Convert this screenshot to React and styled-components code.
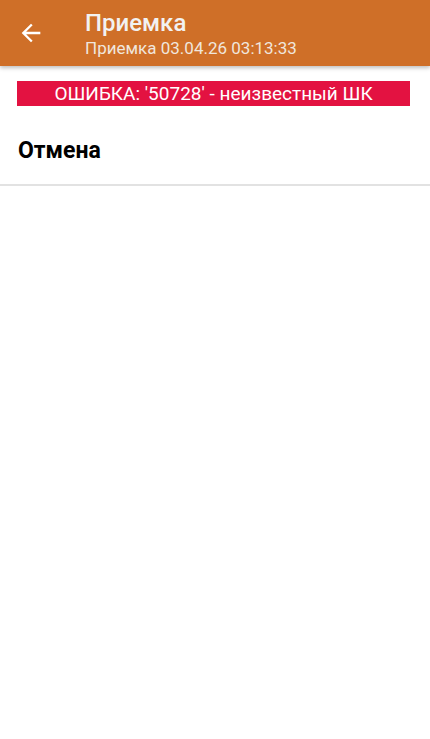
import React from 'react';
import styled, { createGlobalStyle } from 'styled-components';

const Global = createGlobalStyle`
  html, body {
    margin: 0;
    padding: 0;
    background: #ffffff;
    font-family: Roboto, 'Noto Sans', sans-serif;
  }
`;

const Page = styled.div`
  width: 430px;
  height: 739px;
  background: #ffffff;
  display: flex;
  flex-direction: column;
`;

const Toolbar = styled.div`
  height: 66px;
  flex-shrink: 0;
  background: #cf6f28;
  display: flex;
  align-items: center;
  box-shadow: 0 2px 4px rgba(0, 0, 0, 0.25);
  position: relative;
  z-index: 1;
`;

const BackButton = styled.div`
  width: 85px;
  height: 66px;
  display: flex;
  align-items: center;
  padding: 0 0 0 17px;
  box-sizing: border-box;
`;

const Titles = styled.div`
  display: flex;
  flex-direction: column;
  color: #f2f2f2;
  margin-top: 2px;
`;

const Title = styled.div`
  font-size: 24px;
  font-weight: 500;
  line-height: 27px;
`;

const Subtitle = styled.div`
  font-size: 17px;
  line-height: 22px;
  color: #f0e6dd;
`;

const ErrorBar = styled.div`
  margin: 15px 20px 0 17px;
  height: 25px;
  flex-shrink: 0;
  background: #e31241;
  color: #ffffff;
  font-size: 19px;
  line-height: 25px;
  text-align: center;
  white-space: nowrap;
`;

const Row = styled.div`
  height: 80px;
  flex-shrink: 0;
  display: flex;
  align-items: center;
  padding: 10px 0 0 18px;
  box-sizing: border-box;
  font-size: 23px;
  font-weight: 700;
  color: #000000;
  border-bottom: 2px solid #e2e2e2;
`;

export default function App() {
  return (
    <Page>
      <Global />
      <Toolbar>
        <BackButton>
          <svg width="28" height="28" viewBox="0 0 24 24">
            <path d="M20 11H7.83l5.59-5.59L12 4l-8 8 8 8 1.41-1.41L7.83 13H20v-2z" fill="#ffffff" />
          </svg>
        </BackButton>
        <Titles>
          <Title>Приемка</Title>
          <Subtitle>Приемка 03.04.26 03:13:33</Subtitle>
        </Titles>
      </Toolbar>
      <ErrorBar>ОШИБКА: '50728' - неизвестный ШК</ErrorBar>
      <Row>Отмена</Row>
    </Page>
  );
}
